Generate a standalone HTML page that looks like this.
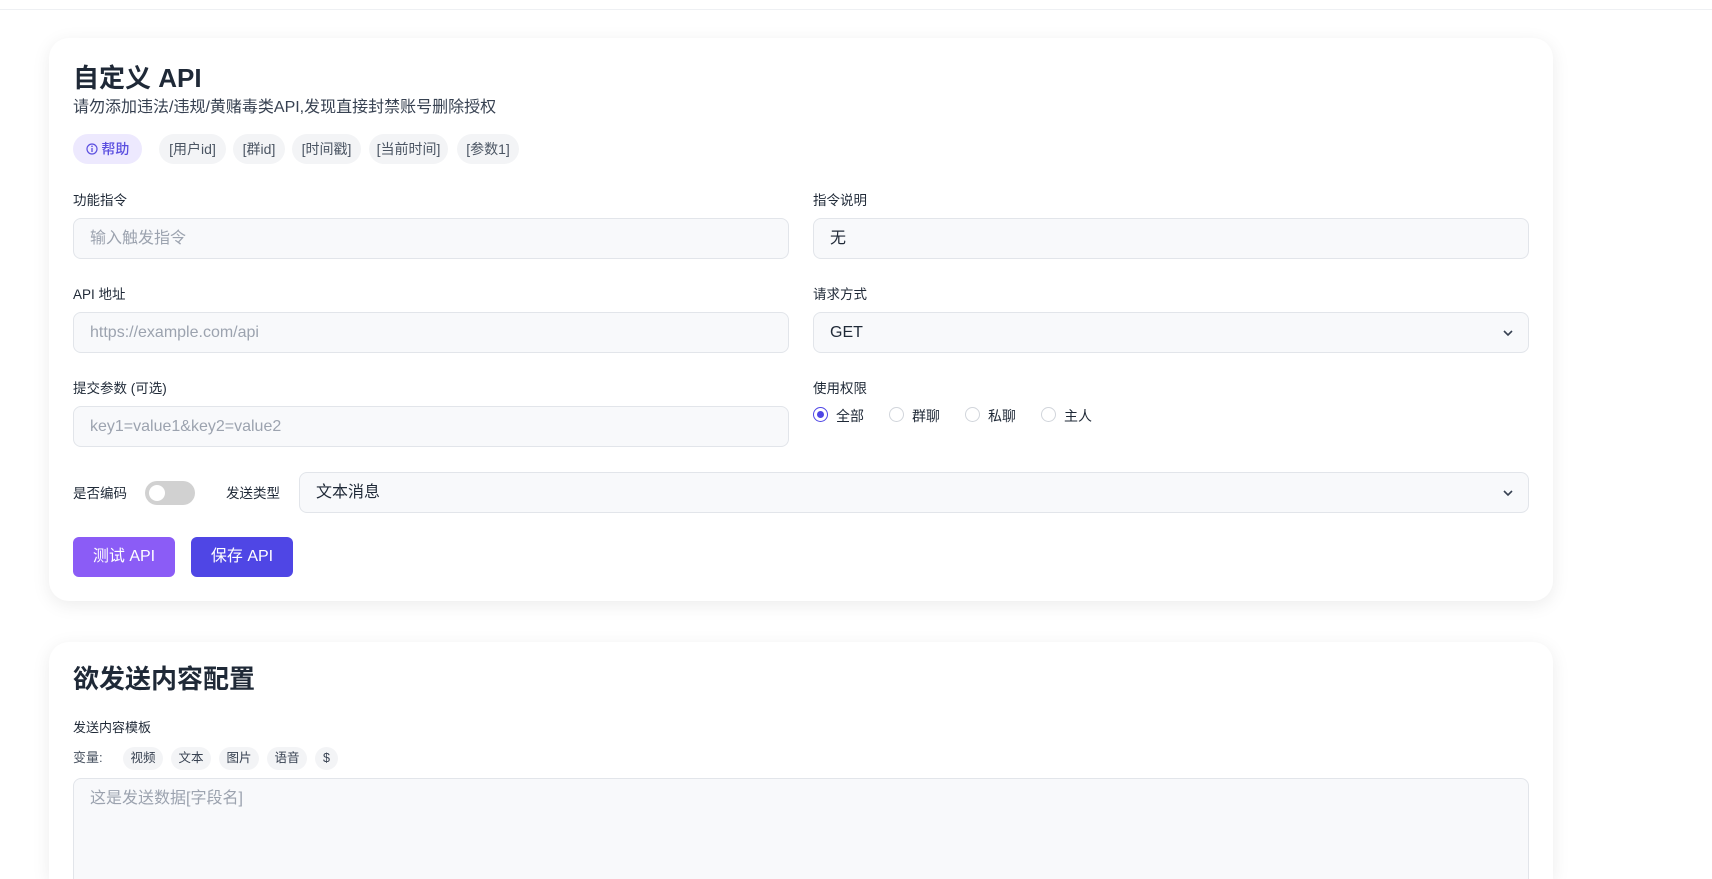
<!DOCTYPE html>
<html><head><meta charset="utf-8"><style>
*{box-sizing:border-box;margin:0;padding:0}
html,body{width:1712px;height:879px;overflow:hidden;background:#fff}
body{font-family:"Liberation Sans","Noto Sans CJK SC",sans-serif;color:#1f2937}
#wrap{position:relative;width:1712px;height:879px;overflow:hidden;background:#fff}
.top{position:absolute;left:0;top:0;width:1712px;height:10px;border-bottom:1px solid #eef0f3}
.card{position:absolute;left:49px;width:1504px;background:#fff;border-radius:20px;box-shadow:0 4px 18px rgba(0,0,0,.08)}
.abs{position:absolute}
h1{position:absolute;font-size:26px;font-weight:700;color:#1f2937}
.sub{font-size:16px;color:#374151}
.chip{position:absolute;top:134px;height:30px;border-radius:15px;background:#f3f4f6;color:#4b5563;font-size:14px;line-height:30px;text-align:center}
.lbl{position:absolute;font-size:13.5px;color:#1f2937}
.inp{position:absolute;height:41px;background:#f8f9fb;border:1px solid #e2e5ea;border-radius:8px;font-size:16px;line-height:39px;padding-left:16px;color:#9ca3af}
.val{color:#1f2937}
.chev{position:absolute;right:14px;top:14px}
.radio{position:absolute;top:407px;width:15px;height:15px;border:1px solid #d1d5db;border-radius:50%}
.rt{position:absolute;top:406px;font-size:14px}
.btn{position:absolute;top:537px;height:40px;border-radius:6px;color:#fff;font-size:16px;line-height:40px;text-align:center}
.vc{position:absolute;top:747px;height:23px;border-radius:12px;background:#f3f4f6;font-size:12.5px;line-height:23px;text-align:center;color:#374151}
</style></head><body><div id="wrap">
<div class="top"></div>
<div class="card" style="top:38px;height:563px"></div>
<h1 style="left:73px;top:58px">自定义 API</h1>
<div class="abs sub" style="left:73px;top:93px">请勿添加违法/违规/黄赌毒类API,发现直接封禁账号删除授权</div>
<div class="chip" style="left:73px;width:69px;background:#ede9fe;color:#5b4fe0;font-weight:500">
<svg width="12" height="12" viewBox="0 0 12 12" style="vertical-align:-1px"><circle cx="6" cy="6" r="5" fill="none" stroke="#5b4fe0" stroke-width="1.2"/><line x1="6" y1="5" x2="6" y2="9" stroke="#5b4fe0" stroke-width="1.3"/><circle cx="6" cy="3.3" r=".8" fill="#5b4fe0"/></svg> 帮助</div>
<div class="chip" style="left:159px;width:67px">[用户id]</div>
<div class="chip" style="left:233px;width:52px">[群id]</div>
<div class="chip" style="left:292px;width:69px">[时间戳]</div>
<div class="chip" style="left:369px;width:79px">[当前时间]</div>
<div class="chip" style="left:457px;width:62px">[参数1]</div>

<div class="lbl" style="left:73px;top:189px">功能指令</div>
<div class="lbl" style="left:813px;top:189px">指令说明</div>
<div class="inp" style="left:73px;top:218px;width:716px">输入触发指令</div>
<div class="inp val" style="left:813px;top:218px;width:716px">无</div>

<div class="lbl" style="left:73px;top:283px">API 地址</div>
<div class="lbl" style="left:813px;top:283px">请求方式</div>
<div class="inp" style="left:73px;top:312px;width:716px">https://example.com/api</div>
<div class="inp val" style="left:813px;top:312px;width:716px">GET<svg class="chev" width="12" height="12" viewBox="0 0 12 12"><path d="M2 4l4 4 4-4" fill="none" stroke="#374151" stroke-width="1.6"/></svg></div>

<div class="lbl" style="left:73px;top:377px">提交参数 (可选)</div>
<div class="lbl" style="left:813px;top:377px">使用权限</div>
<div class="inp" style="left:73px;top:406px;width:716px">key1=value1&amp;key2=value2</div>
<div class="radio" style="left:813px;border-color:#4f46e5"><div style="position:absolute;left:3px;top:3px;width:7px;height:7px;border-radius:50%;background:#4f46e5"></div></div>
<div class="rt" style="left:836px">全部</div>
<div class="radio" style="left:889px"></div><div class="rt" style="left:912px">群聊</div>
<div class="radio" style="left:965px"></div><div class="rt" style="left:988px">私聊</div>
<div class="radio" style="left:1041px"></div><div class="rt" style="left:1064px">主人</div>

<div class="lbl" style="left:73px;top:482px">是否编码</div>
<div class="abs" style="left:145px;top:481px;width:50px;height:24px;border-radius:12px;background:#d1d1d1"><div style="position:absolute;left:4px;top:4px;width:16px;height:16px;border-radius:50%;background:#fff"></div></div>
<div class="lbl" style="left:226px;top:482px">发送类型</div>
<div class="inp val" style="left:299px;top:472px;width:1230px">文本消息<svg class="chev" width="12" height="12" viewBox="0 0 12 12"><path d="M2 4l4 4 4-4" fill="none" stroke="#374151" stroke-width="1.6"/></svg></div>

<div class="btn" style="left:73px;width:102px;background:#8b5cf6">测试 API</div>
<div class="btn" style="left:191px;width:102px;background:#4f46e5">保存 API</div>

<div class="card" style="top:642px;height:237px;border-radius:20px 20px 0 0"></div>
<h1 style="left:73px;top:659px">欲发送内容配置</h1>
<div class="lbl" style="left:73px;top:717px;font-size:13px">发送内容模板</div>
<div class="abs" style="left:73px;top:747px;font-size:13px;color:#4b5563">变量:</div>
<div class="vc" style="left:123px;width:40px">视频</div>
<div class="vc" style="left:171px;width:40px">文本</div>
<div class="vc" style="left:219px;width:40px">图片</div>
<div class="vc" style="left:267px;width:40px">语音</div>
<div class="vc" style="left:315px;width:23px">$</div>
<div class="inp" style="left:73px;top:778px;width:1456px;height:101px;line-height:24px;padding-top:8px;border-bottom:none;border-radius:8px 8px 0 0">这是发送数据[字段名]</div>
</div></body></html>
